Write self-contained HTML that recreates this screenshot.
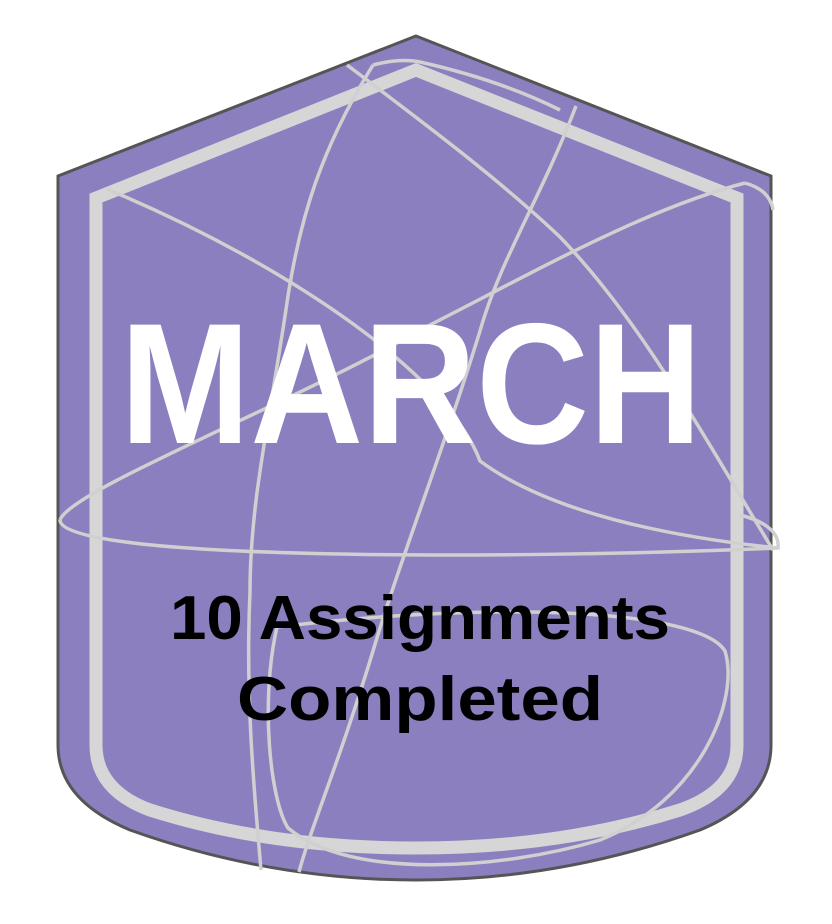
<!DOCTYPE html>
<html><head><meta charset="utf-8"><style>
html,body{margin:0;padding:0;background:#fff;width:832px;height:924px;overflow:hidden}
</style></head><body>
<svg width="832" height="924" viewBox="0 0 832 924" xmlns="http://www.w3.org/2000/svg">
<path d="M416 36 L771 176 L771 745 Q771 800 700 830 Q560 880 416 880 Q270 880 130 830 Q58 800 58 745 L58 176 Z" fill="#8c7fc0" stroke="#555" stroke-width="3"/>
<path d="M416 70 L737 198 L737 745 Q737 790 680 810 Q560 848 416 848 Q270 848 150 810 Q96 790 96 745 L96 198 Z" fill="none" stroke="#d6d6d6" stroke-width="13"/>
<g fill="none" stroke="#d0d0d0" stroke-width="3.5">
<path d="M60 520 C60 560 500 560 778 548 C780 530 760 520 740 515"/>
<path d="M60 520 C70 490 300 400 420 330 C520 280 640 210 745 183"/>
<path d="M107 189 C300 270 450 380 480 461 C560 520 700 540 778 548"/>
<path d="M373 65 C320 150 300 220 288 296 C270 420 250 500 250 592 C245 700 255 800 261 870"/>
<path d="M576 106 C540 200 500 260 480 331 C440 460 400 560 373 651 C340 760 310 830 299 872"/>
<path d="M347 65 C420 120 500 180 560 237 C640 320 700 430 773 550"/>
<path d="M277 627 C260 700 270 800 288 828 C350 880 500 870 600 840 C700 800 740 700 725 651 C700 610 500 600 277 627"/>
<path d="M373 65 Q400 58 420 62 Q500 80 560 110"/>
<path d="M745 183 Q770 190 773 210"/>
</g>
<text x="120" y="443" textLength="582" lengthAdjust="spacingAndGlyphs" font-family="Liberation Sans, sans-serif" font-weight="bold" font-size="172" fill="#fff">MARCH</text>
<text x="170" y="639" textLength="500" lengthAdjust="spacingAndGlyphs" font-family="Liberation Sans, sans-serif" font-weight="bold" font-size="62" fill="#000">10 Assignments</text>
<text x="237" y="720" textLength="366" lengthAdjust="spacingAndGlyphs" font-family="Liberation Sans, sans-serif" font-weight="bold" font-size="62" fill="#000">Completed</text>
</svg>
</body></html>
